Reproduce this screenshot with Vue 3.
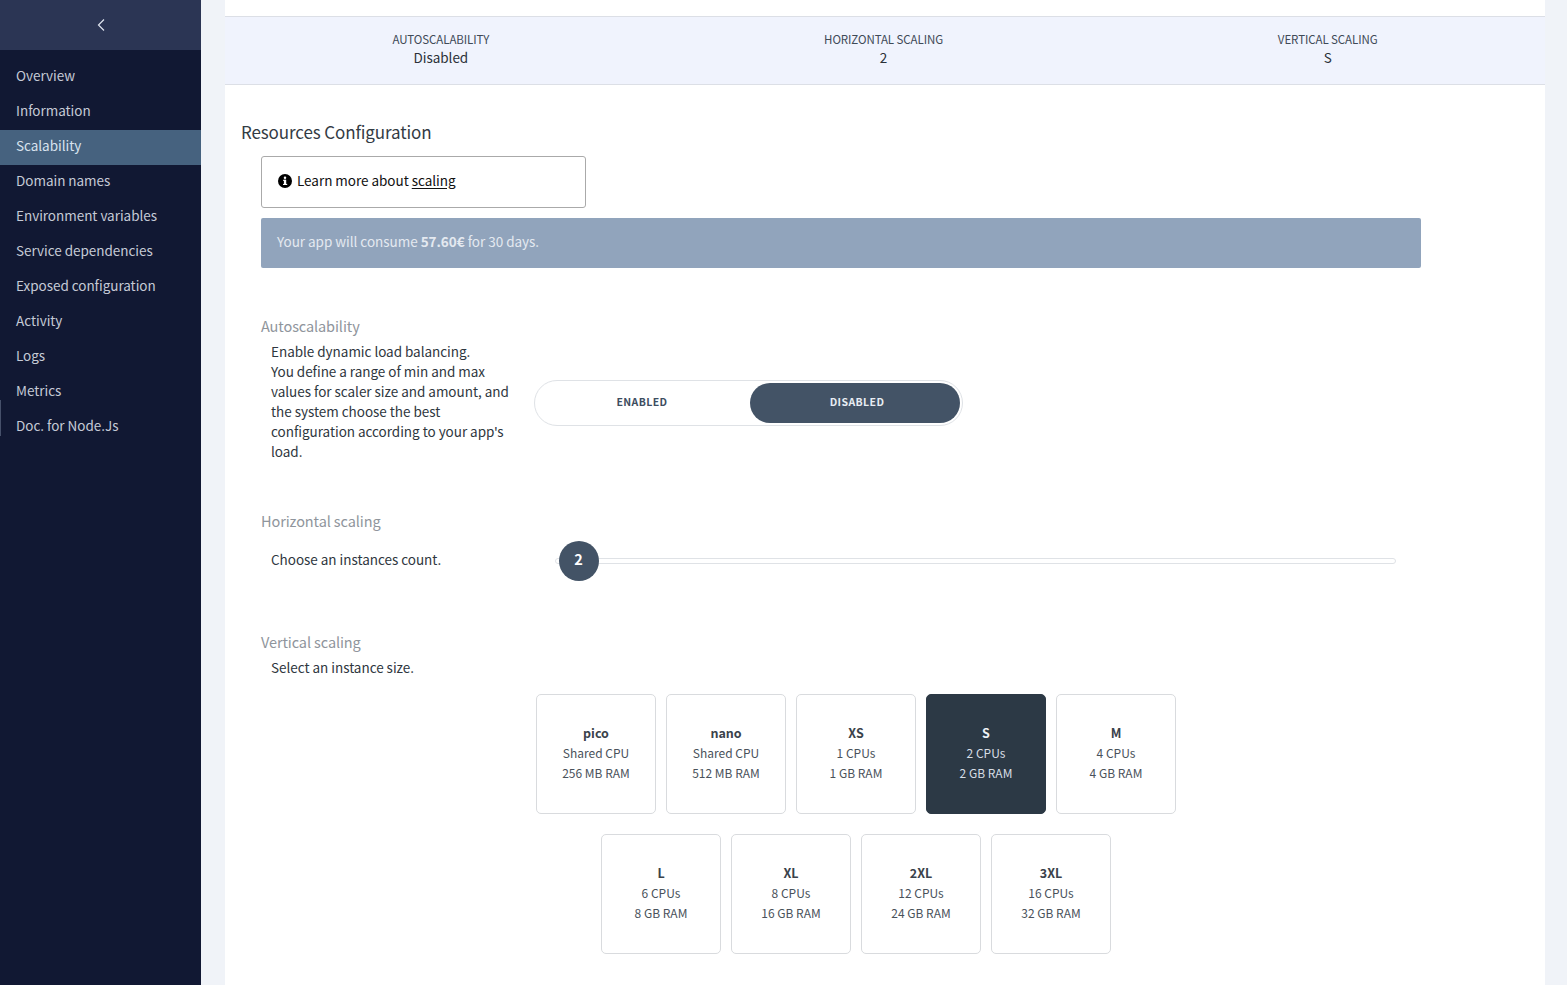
<script setup>
const nav = ['Overview','Information','Scalability','Domain names','Environment variables','Service dependencies','Exposed configuration','Activity','Logs','Metrics','Doc. for Node.Js']
const stats = [['AUTOSCALABILITY','Disabled'],['HORIZONTAL SCALING','2'],['VERTICAL SCALING','S']]
const row1 = [['pico','Shared CPU','256 MB RAM'],['nano','Shared CPU','512 MB RAM'],['XS','1 CPUs','1 GB RAM'],['S','2 CPUs','2 GB RAM'],['M','4 CPUs','4 GB RAM']]
const row2 = [['L','6 CPUs','8 GB RAM'],['XL','8 CPUs','16 GB RAM'],['2XL','12 CPUs','24 GB RAM'],['3XL','16 CPUs','32 GB RAM']]
</script>

<template>
  <div class="page">
    <aside class="side">
      <div class="collapse">
        <svg width="10" height="14" viewBox="0 0 10 14"><path d="M8 1.5 L2.5 7 L8 12.5" fill="none" stroke="#dfe4ee" stroke-width="1.2"/></svg>
      </div>
      <nav class="nav">
        <a v-for="n in nav" :key="n" class="nav-item" :class="{ active: n === 'Scalability', doc: n === 'Doc. for Node.Js' }">{{ n }}</a>
      </nav>
    </aside>
    <main class="main">
      <div class="card">
        <div class="stats">
          <div v-for="s in stats" :key="s[0]" class="stat">
            <div class="stat-label">{{ s[0] }}</div>
            <div class="stat-value">{{ s[1] }}</div>
          </div>
        </div>
        <section class="config">
          <h2 class="title">Resources Configuration</h2>
          <div class="body">
            <div class="info">
              <svg width="14" height="14" viewBox="0 0 14 14"><circle cx="7" cy="7" r="7" fill="#000"/><rect x="5.9" y="5.8" width="2.3" height="5" fill="#fff"/><rect x="5" y="5.8" width="3" height="1" fill="#fff"/><rect x="5" y="9.9" width="4.2" height="1.1" fill="#fff"/><circle cx="7" cy="3.8" r="1.25" fill="#fff"/></svg>
              <span class="info-text">Learn more about <u>scaling</u></span>
            </div>
            <div class="consume">Your app will consume <b>57.60€</b> for 30 days.</div>

            <h3 class="label auto-label">Autoscalability</h3>
            <div class="row auto-row">
              <p class="desc">Enable dynamic load balancing.<br>You define a range of min and max values for scaler size and amount, and the system choose the best configuration according to your app's load.</p>
              <div class="toggle">
                <div class="opt off">ENABLED</div>
                <div class="opt on">DISABLED</div>
              </div>
            </div>

            <h3 class="label horiz-label">Horizontal scaling</h3>
            <div class="row slider-row">
              <p class="desc">Choose an instances count.</p>
              <div class="slider"><div class="knob">2</div></div>
            </div>

            <h3 class="label vert-label">Vertical scaling</h3>
            <p class="desc vert-desc">Select an instance size.</p>
            <div class="sizes">
              <div class="size-row">
                <div v-for="c in row1" :key="c[0]" class="size" :class="{ selected: c[0] === 'S' }">
                  <b>{{ c[0] }}</b><span>{{ c[1] }}</span><span>{{ c[2] }}</span>
                </div>
              </div>
              <div class="size-row">
                <div v-for="c in row2" :key="c[0]" class="size">
                  <b>{{ c[0] }}</b><span>{{ c[1] }}</span><span>{{ c[2] }}</span>
                </div>
              </div>
            </div>
          </div>
        </section>
      </div>
    </main>
  </div>
</template>

<style>
html, body { margin: 0; height: 100%; overflow: hidden; }
</style>

<style scoped>
.page { display: flex; height: 985px; overflow: hidden; background: #f0f3f8; font-family: "Noto Sans CJK JP", "Noto Sans", sans-serif; color: #2c3e50; font-size: 13.5px; letter-spacing: -0.03px; }
.side { width: 201px; flex: none; background: #111833; }
.collapse { height: 50px; background: #2b3554; display: flex; align-items: center; justify-content: center; }
.nav { padding-top: 10px; }
.nav-item { position: relative; display: block; height: 35px; line-height: 31px; padding-left: 15px; border-left: 1px solid transparent; color: #c5cad6; font-size: 13.5px; }
.nav-item.active { background: #46627f; color: #d8e2ee; }
.nav-item.doc::before { content: ""; position: absolute; left: -1px; top: -10px; width: 1px; height: 36px; background: #46506a; }
.main { flex: 1; padding: 0 22px 0 24px; min-width: 0; }
.card { background: #fff; height: 985px; padding-top: 16px; box-sizing: border-box; }
.stats { display: flex; justify-content: space-around; height: 69px; box-sizing: border-box; background: #f0f3fd; border-top: 1px solid #dcdfe6; border-bottom: 1px solid #dcdfe6; padding: 13px 0 0; text-align: center; }
.stat-label { font-size: 11.5px; line-height: 18px; color: #3f4a57; letter-spacing: -0.08px; }
.stat-value { font-size: 13.5px; line-height: 18px; color: #2b3138; }
.config { padding: 0 0 0 16px; }
.title { margin: 34px 0 0; font-size: 17px; line-height: 26px; font-weight: 400; color: #333b44; letter-spacing: -0.12px; }
.body { padding-left: 20px; }
.info { width: 325px; height: 52px; box-sizing: border-box; margin-top: 11px; border: 1px solid #aaa; border-radius: 3px; display: flex; align-items: center; gap: 5px; padding: 0 0 2px 16px; color: #111; }
.info-text { margin-top: -2px; }
.info u { text-underline-offset: 2px; }
.consume { width: 1160px; height: 50px; margin-top: 10px; box-sizing: border-box; background: #91a4bc; border-radius: 2px; padding-left: 16px; line-height: 46px; color: #e4e9f0; }
.label { margin: 0; font-size: 14.5px; line-height: 20px; font-weight: 400; color: #8f959c; letter-spacing: -0.1px; }
.auto-label { margin-top: 48px; }
.horiz-label { margin-top: 50px; }
.vert-label { margin-top: 50px; }
.row { display: flex; align-items: center; }
.desc { margin: 0; width: 245px; flex: none; padding-left: 10px; box-sizing: border-box; line-height: 20px; color: #2f3740; }
.auto-row { margin-top: 5px; height: 120px; }
.auto-row .desc { width: 255px; }
.toggle { margin: 4px 0 0 18px; width: 429px; height: 46px; box-sizing: border-box; border: 1px solid #dfe2e6; border-radius: 23px; padding: 2px; display: flex; }
.opt { display: flex; align-items: center; justify-content: center; box-sizing: border-box; font-size: 10.5px; font-weight: 700; letter-spacing: 0.4px; color: #3d4d60; border-radius: 20px; }
.opt.off { flex: 1; padding: 0 3px 4px 0; }
.opt.on { background: #435366; color: #e8edf3; flex: none; width: 210px; height: 40px; padding: 0 0 3px 4px; }
.slider-row { margin-top: 5px; height: 46px; }
.slider { position: relative; margin-left: 49px; width: 841px; height: 6px; box-sizing: border-box; border: 1px solid #dfe2e6; border-radius: 3px; margin-top: 3px; }
.knob { position: absolute; left: 3px; top: -18px; width: 40px; height: 40px; padding: 0 1px 4px 0; box-sizing: border-box; border-radius: 50%; background: #435366; color: #fff; font-size: 14.5px; font-weight: 700; display: flex; align-items: center; justify-content: center; }
.vert-desc { margin-top: 5px; width: auto; }
.sizes { width: 640px; margin: 17px 0 0 275px; display: flex; flex-direction: column; gap: 20px; }
.size-row { display: flex; justify-content: center; gap: 10px; }
.size { width: 120px; height: 120px; box-sizing: border-box; padding-bottom: 2px; border: 1px solid #d9dbde; border-radius: 5px; display: flex; flex-direction: column; align-items: center; justify-content: center; font-size: 12px; letter-spacing: 0; line-height: 20px; color: #4a525b; }
.size b { color: #3a424b; font-size: 12.5px; }
.size.selected { background: #2c3945; border-color: #2c3945; color: #d7dde4; }
.size.selected b { color: #eef1f4; }
</style>
